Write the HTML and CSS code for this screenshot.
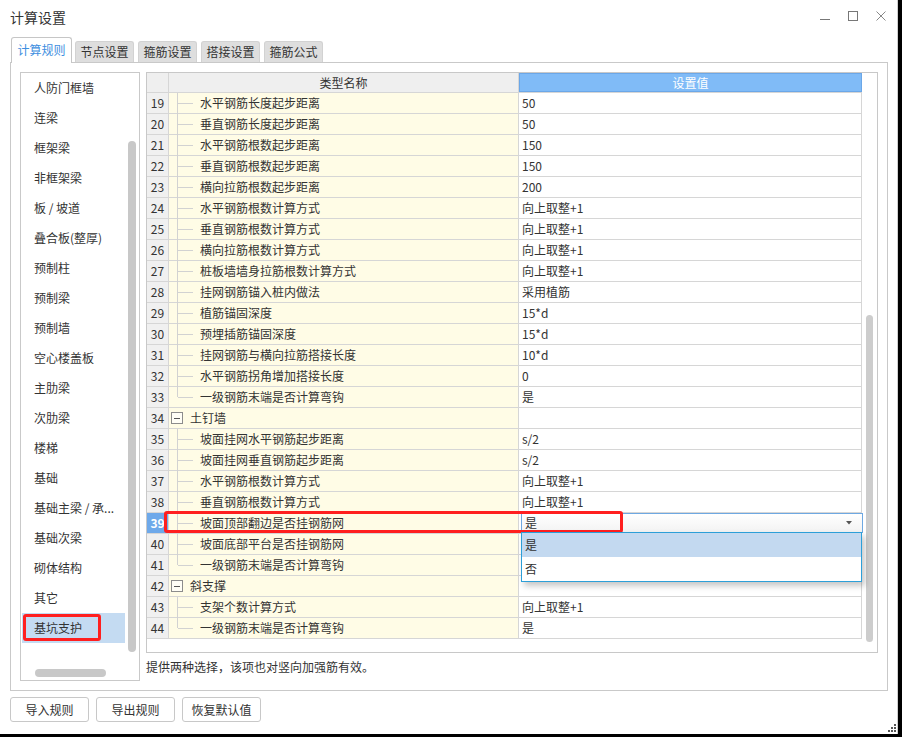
FILE: index.html
```html
<!DOCTYPE html>
<html lang="zh-CN">
<head>
<meta charset="utf-8">
<title>计算设置</title>
<link rel="stylesheet" href="styles.css">
</head>
<body>
<div class="window">
  <div class="titlebar">
    <span class="title">计算设置</span>
    <div class="controls">
      <svg class="ctl" width="10" height="10" viewBox="0 0 10 10"><path d="M0 8.5h10" stroke="#777" stroke-width="1"/></svg>
      <svg class="ctl" width="10" height="10" viewBox="0 0 10 10"><rect x="0.5" y="0.5" width="9" height="9" fill="none" stroke="#777" stroke-width="1"/></svg>
      <svg class="ctl" width="10" height="10" viewBox="0 0 10 10"><path d="M0.5 0.5L9.5 9.5M9.5 0.5L0.5 9.5" stroke="#888" stroke-width="1"/></svg>
    </div>
  </div>

  <div class="tabs">
    <div class="tab active">计算规则</div>
    <div class="tab">节点设置</div>
    <div class="tab">箍筋设置</div>
    <div class="tab">搭接设置</div>
    <div class="tab">箍筋公式</div>
  </div>

  <div class="panel">
    <div class="list">
      <div class="list-main">
        <ul class="items">
          <li class="item">人防门框墙</li>
          <li class="item">连梁</li>
          <li class="item">框架梁</li>
          <li class="item">非框架梁</li>
          <li class="item">板 / 坡道</li>
          <li class="item">叠合板(整厚)</li>
          <li class="item">预制柱</li>
          <li class="item">预制梁</li>
          <li class="item">预制墙</li>
          <li class="item">空心楼盖板</li>
          <li class="item">主肋梁</li>
          <li class="item">次肋梁</li>
          <li class="item">楼梯</li>
          <li class="item">基础</li>
          <li class="item">基础主梁 / 承...</li>
          <li class="item">基础次梁</li>
          <li class="item">砌体结构</li>
          <li class="item">其它</li>
          <li class="item selected">基坑支护<span class="mark"></span></li>
        </ul>
        <div class="vtrack"><div class="vthumb"></div></div>
      </div>
      <div class="htrack"><div class="hthumb"></div></div>
    </div>

    <div class="right">
      <div class="grid">
        <div class="table">
          <div class="row head">
            <div class="c num"></div>
            <div class="c name">类型名称</div>
            <div class="c val">设置值</div>
          </div>
          <div class="row"><div class="c num">19</div><div class="c name"><span class="tree"></span>水平钢筋长度起步距离</div><div class="c val">50</div></div>
          <div class="row"><div class="c num">20</div><div class="c name"><span class="tree"></span>垂直钢筋长度起步距离</div><div class="c val">50</div></div>
          <div class="row"><div class="c num">21</div><div class="c name"><span class="tree"></span>水平钢筋根数起步距离</div><div class="c val">150</div></div>
          <div class="row"><div class="c num">22</div><div class="c name"><span class="tree"></span>垂直钢筋根数起步距离</div><div class="c val">150</div></div>
          <div class="row"><div class="c num">23</div><div class="c name"><span class="tree"></span>横向拉筋根数起步距离</div><div class="c val">200</div></div>
          <div class="row"><div class="c num">24</div><div class="c name"><span class="tree"></span>水平钢筋根数计算方式</div><div class="c val">向上取整+1</div></div>
          <div class="row"><div class="c num">25</div><div class="c name"><span class="tree"></span>垂直钢筋根数计算方式</div><div class="c val">向上取整+1</div></div>
          <div class="row"><div class="c num">26</div><div class="c name"><span class="tree"></span>横向拉筋根数计算方式</div><div class="c val">向上取整+1</div></div>
          <div class="row"><div class="c num">27</div><div class="c name"><span class="tree"></span>桩板墙墙身拉筋根数计算方式</div><div class="c val">向上取整+1</div></div>
          <div class="row"><div class="c num">28</div><div class="c name"><span class="tree"></span>挂网钢筋锚入桩内做法</div><div class="c val">采用植筋</div></div>
          <div class="row"><div class="c num">29</div><div class="c name"><span class="tree"></span>植筋锚固深度</div><div class="c val">15*d</div></div>
          <div class="row"><div class="c num">30</div><div class="c name"><span class="tree"></span>预埋插筋锚固深度</div><div class="c val">15*d</div></div>
          <div class="row"><div class="c num">31</div><div class="c name"><span class="tree"></span>挂网钢筋与横向拉筋搭接长度</div><div class="c val">10*d</div></div>
          <div class="row"><div class="c num">32</div><div class="c name"><span class="tree"></span>水平钢筋拐角增加搭接长度</div><div class="c val">0</div></div>
          <div class="row"><div class="c num">33</div><div class="c name"><span class="tree last"></span>一级钢筋末端是否计算弯钩</div><div class="c val">是</div></div>
          <div class="row"><div class="c num">34</div><div class="c name"><span class="toggle"></span>土钉墙</div><div class="c val"></div></div>
          <div class="row"><div class="c num">35</div><div class="c name"><span class="tree"></span>坡面挂网水平钢筋起步距离</div><div class="c val">s/2</div></div>
          <div class="row"><div class="c num">36</div><div class="c name"><span class="tree"></span>坡面挂网垂直钢筋起步距离</div><div class="c val">s/2</div></div>
          <div class="row"><div class="c num">37</div><div class="c name"><span class="tree"></span>水平钢筋根数计算方式</div><div class="c val">向上取整+1</div></div>
          <div class="row"><div class="c num">38</div><div class="c name"><span class="tree"></span>垂直钢筋根数计算方式</div><div class="c val">向上取整+1</div></div>
          <div class="row"><div class="c num current">39</div><div class="c name"><span class="tree"></span>坡面顶部翻边是否挂钢筋网</div><div class="c val"><div class="combo"><span>是</span><svg class="arrow" width="6" height="4" viewBox="0 0 6 4"><path d="M0 0h6L3 3.5z" fill="#555"/></svg></div></div></div>
          <div class="row"><div class="c num">40</div><div class="c name"><span class="tree"></span>坡面底部平台是否挂钢筋网</div><div class="c val"></div></div>
          <div class="row"><div class="c num">41</div><div class="c name"><span class="tree last"></span>一级钢筋末端是否计算弯钩</div><div class="c val"></div></div>
          <div class="row"><div class="c num">42</div><div class="c name"><span class="toggle"></span>斜支撑</div><div class="c val"></div></div>
          <div class="row"><div class="c num">43</div><div class="c name"><span class="tree"></span>支架个数计算方式</div><div class="c val">向上取整+1</div></div>
          <div class="row"><div class="c num">44</div><div class="c name"><span class="tree last"></span>一级钢筋末端是否计算弯钩</div><div class="c val">是</div></div>
        </div>
        <div class="gtrack"><div class="gthumb"></div></div>
        <div class="annot"></div>
        <div class="droplist">
          <div class="opt hl">是</div>
          <div class="opt">否</div>
        </div>
      </div>
      <div class="status">提供两种选择，该项也对竖向加强筋有效。</div>
    </div>
  </div>

  <div class="buttons">
    <div class="btn">导入规则</div>
    <div class="btn">导出规则</div>
    <div class="btn">恢复默认值</div>
  </div>

  <svg class="grip" width="8" height="8" viewBox="0 0 8 8">
    <rect x="6" y="0" width="2" height="2" fill="#555"/>
    <rect x="3" y="3" width="2" height="2" fill="#555"/>
    <rect x="6" y="3" width="2" height="2" fill="#555"/>
    <rect x="0" y="6" width="2" height="2" fill="#555"/>
    <rect x="3" y="6" width="2" height="2" fill="#555"/>
    <rect x="6" y="6" width="2" height="2" fill="#555"/>
  </svg>
</div>
</body>
</html>
```

FILE: styles.css
```css
* { box-sizing: border-box; }

html, body {
  margin: 0;
  padding: 0;
  background: #000;
  width: 902px;
  height: 737px;
  overflow: hidden;
}

body {
  font-family: "Noto Sans CJK SC", "Microsoft YaHei", sans-serif;
  font-size: 12px;
  color: #333;
}

.window {
  position: relative;
  width: 898px;
  height: 734px;
  background: #fff;
  border-right: 1px solid #d0d0d0;
}

/* title bar */
.titlebar {
  height: 32px;
  display: flex;
  align-items: center;
  padding: 0 11px 0 10px;
}
.title {
  font-size: 14px;
  color: #333;
  line-height: 20px;
  margin-top: 1px;
}
.controls {
  margin-left: auto;
  display: flex;
  gap: 18px;
  align-items: center;
}
.ctl { display: block; }

/* tabs */
.tabs {
  height: 30px;
  display: flex;
  align-items: flex-end;
  gap: 4px;
  padding-left: 11px;
}
.tab {
  width: 59px;
  height: 21px;
  line-height: 20px;
  text-align: center;
  background: #dedede;
  border: 1px solid #d2d2d2;
  border-bottom: none;
  border-radius: 3px 3px 0 0;
  color: #333;
}
.tab.active {
  width: 61px;
  height: 26px;
  line-height: 24px;
  margin-right: -1px;
  margin-bottom: -1px;
  background: #fff;
  border-color: #c6c6c6;
  color: #3d8ee0;
  position: relative;
  z-index: 1;
}

/* main panel */
.panel {
  margin-left: 10px;
  width: 878px;
  height: 629px;
  border: 1px solid #c9c9c9;
  padding: 9px;
  display: flex;
  gap: 6px;
}

/* left list */
.list {
  width: 120px;
  height: 609px;
  border: 1px solid #c9c9c9;
  display: flex;
  flex-direction: column;
}
.list-main {
  height: 590px;
  display: flex;
}
.items {
  list-style: none;
  margin: 0;
  padding: 0;
  width: 105px;
}
.item {
  position: relative;
  margin-left: 1px;
  width: 103px;
  height: 30px;
  line-height: 30px;
  padding-left: 12px;
  white-space: nowrap;
  color: #333;
}
.item.selected { background: #c4dbf2; }
.mark {
  position: absolute;
  left: 1px;
  top: 1px;
  width: 78px;
  height: 27px;
  border: 3px solid #ff1f1f;
  border-radius: 3px;
}
.vtrack {
  width: 12px;
  padding-left: 2px;
  padding-top: 68px;
}
.vthumb {
  width: 8px;
  height: 511px;
  border-radius: 4px;
  background: #c8c8c8;
}
.htrack {
  padding-left: 14px;
  padding-top: 6px;
}
.hthumb {
  width: 71px;
  height: 8px;
  border-radius: 4px;
  background: #c8c8c8;
}

/* right side */
.right {
  width: 732px;
  display: flex;
  flex-direction: column;
}
.grid {
  position: relative;
  height: 586px;
  border: 1px solid #c8c8c8;
  display: flex;
}
.table { width: 715px; }
.row {
  display: grid;
  grid-template-columns: 22px 350px 343px;
  height: 21px;
  border-bottom: 1px solid #d6d6d6;
}
.c {
  height: 20px;
  line-height: 20px;
  border-right: 1px solid #d6d6d6;
  white-space: nowrap;
  overflow: hidden;
}
.num {
  background: #f0f0f0;
  text-align: center;
  color: #333;
}
.num.current {
  background: #6ea9ea;
  color: #fff;
  font-weight: bold;
}
.name {
  background: #fffce6;
  display: flex;
  align-items: center;
  overflow: visible;
}
.val {
  background: #fff;
  padding-left: 3px;
  overflow: visible;
}
.row.head { height: 20px; }
.row.head .c { height: 19px; line-height: 19px; }
.row.head .num, .row.head .name {
  background: #efefef;
}
.row.head .name { justify-content: center; }
.row.head .val {
  background: #80bbf7;
  border: 1px solid #6ba7e8;
  color: #fff;
  text-align: center;
  padding-left: 0;
  line-height: 17px;
}

.tree {
  position: relative;
  width: 31px;
  height: 20px;
  flex: none;
}
.tree::before {
  content: "";
  position: absolute;
  left: 8px;
  top: 0;
  width: 1px;
  height: 21px;
  background: #d2d2d2;
}
.tree.last::before { height: 10px; }
.tree::after {
  content: "";
  position: absolute;
  left: 9px;
  top: 10px;
  width: 15px;
  height: 1px;
  background: #d2d2d2;
}
.toggle {
  position: relative;
  flex: none;
  width: 12px;
  height: 12px;
  margin-left: 2px;
  margin-right: 7px;
  border: 1px solid #8c8c8c;
  background: #fffef6;
}
.toggle::after {
  content: "";
  position: absolute;
  left: 2px;
  right: 2px;
  top: 5px;
  height: 1px;
  background: #555;
}

/* combo in cell */
.combo {
  margin-left: -1px;
  width: 342px;
  height: 20px;
  border: 1px solid #6ea8e2;
  background: linear-gradient(#ffffff, #f3f3f3);
  display: flex;
  align-items: center;
  padding-left: 3px;
  padding-right: 10px;
  line-height: 18px;
}
.combo .arrow { margin-left: auto; }

.gtrack {
  width: 15px;
  padding-left: 4px;
  padding-top: 242px;
}
.gthumb {
  width: 7px;
  height: 327px;
  border-radius: 4px;
  background: #cdcdcd;
}

.annot {
  position: absolute;
  left: 17px;
  top: 438px;
  width: 459px;
  height: 22px;
  border: 3px solid #ff1f1f;
  border-radius: 3px;
}
.droplist {
  position: absolute;
  left: 374px;
  top: 459px;
  width: 341px;
  height: 50px;
  border: 1px solid #2c9fd8;
  background: #fff;
  box-shadow: 3px 4px 6px rgba(0, 0, 0, 0.22);
}
.opt {
  height: 24px;
  line-height: 24px;
  padding-left: 3px;
}
.opt.hl { background: #c3d9f0; }

.status {
  height: 28px;
  line-height: 28px;
  color: #333;
}

/* buttons */
.buttons {
  margin-top: 6px;
  padding-left: 10px;
  display: flex;
  gap: 7px;
}
.btn {
  width: 79px;
  height: 25px;
  line-height: 23px;
  text-align: center;
  border: 1px solid #c8c8c8;
  border-radius: 3px;
  background: #fff;
  color: #333;
}

.grip {
  position: absolute;
  left: 888px;
  top: 724px;
}
```
